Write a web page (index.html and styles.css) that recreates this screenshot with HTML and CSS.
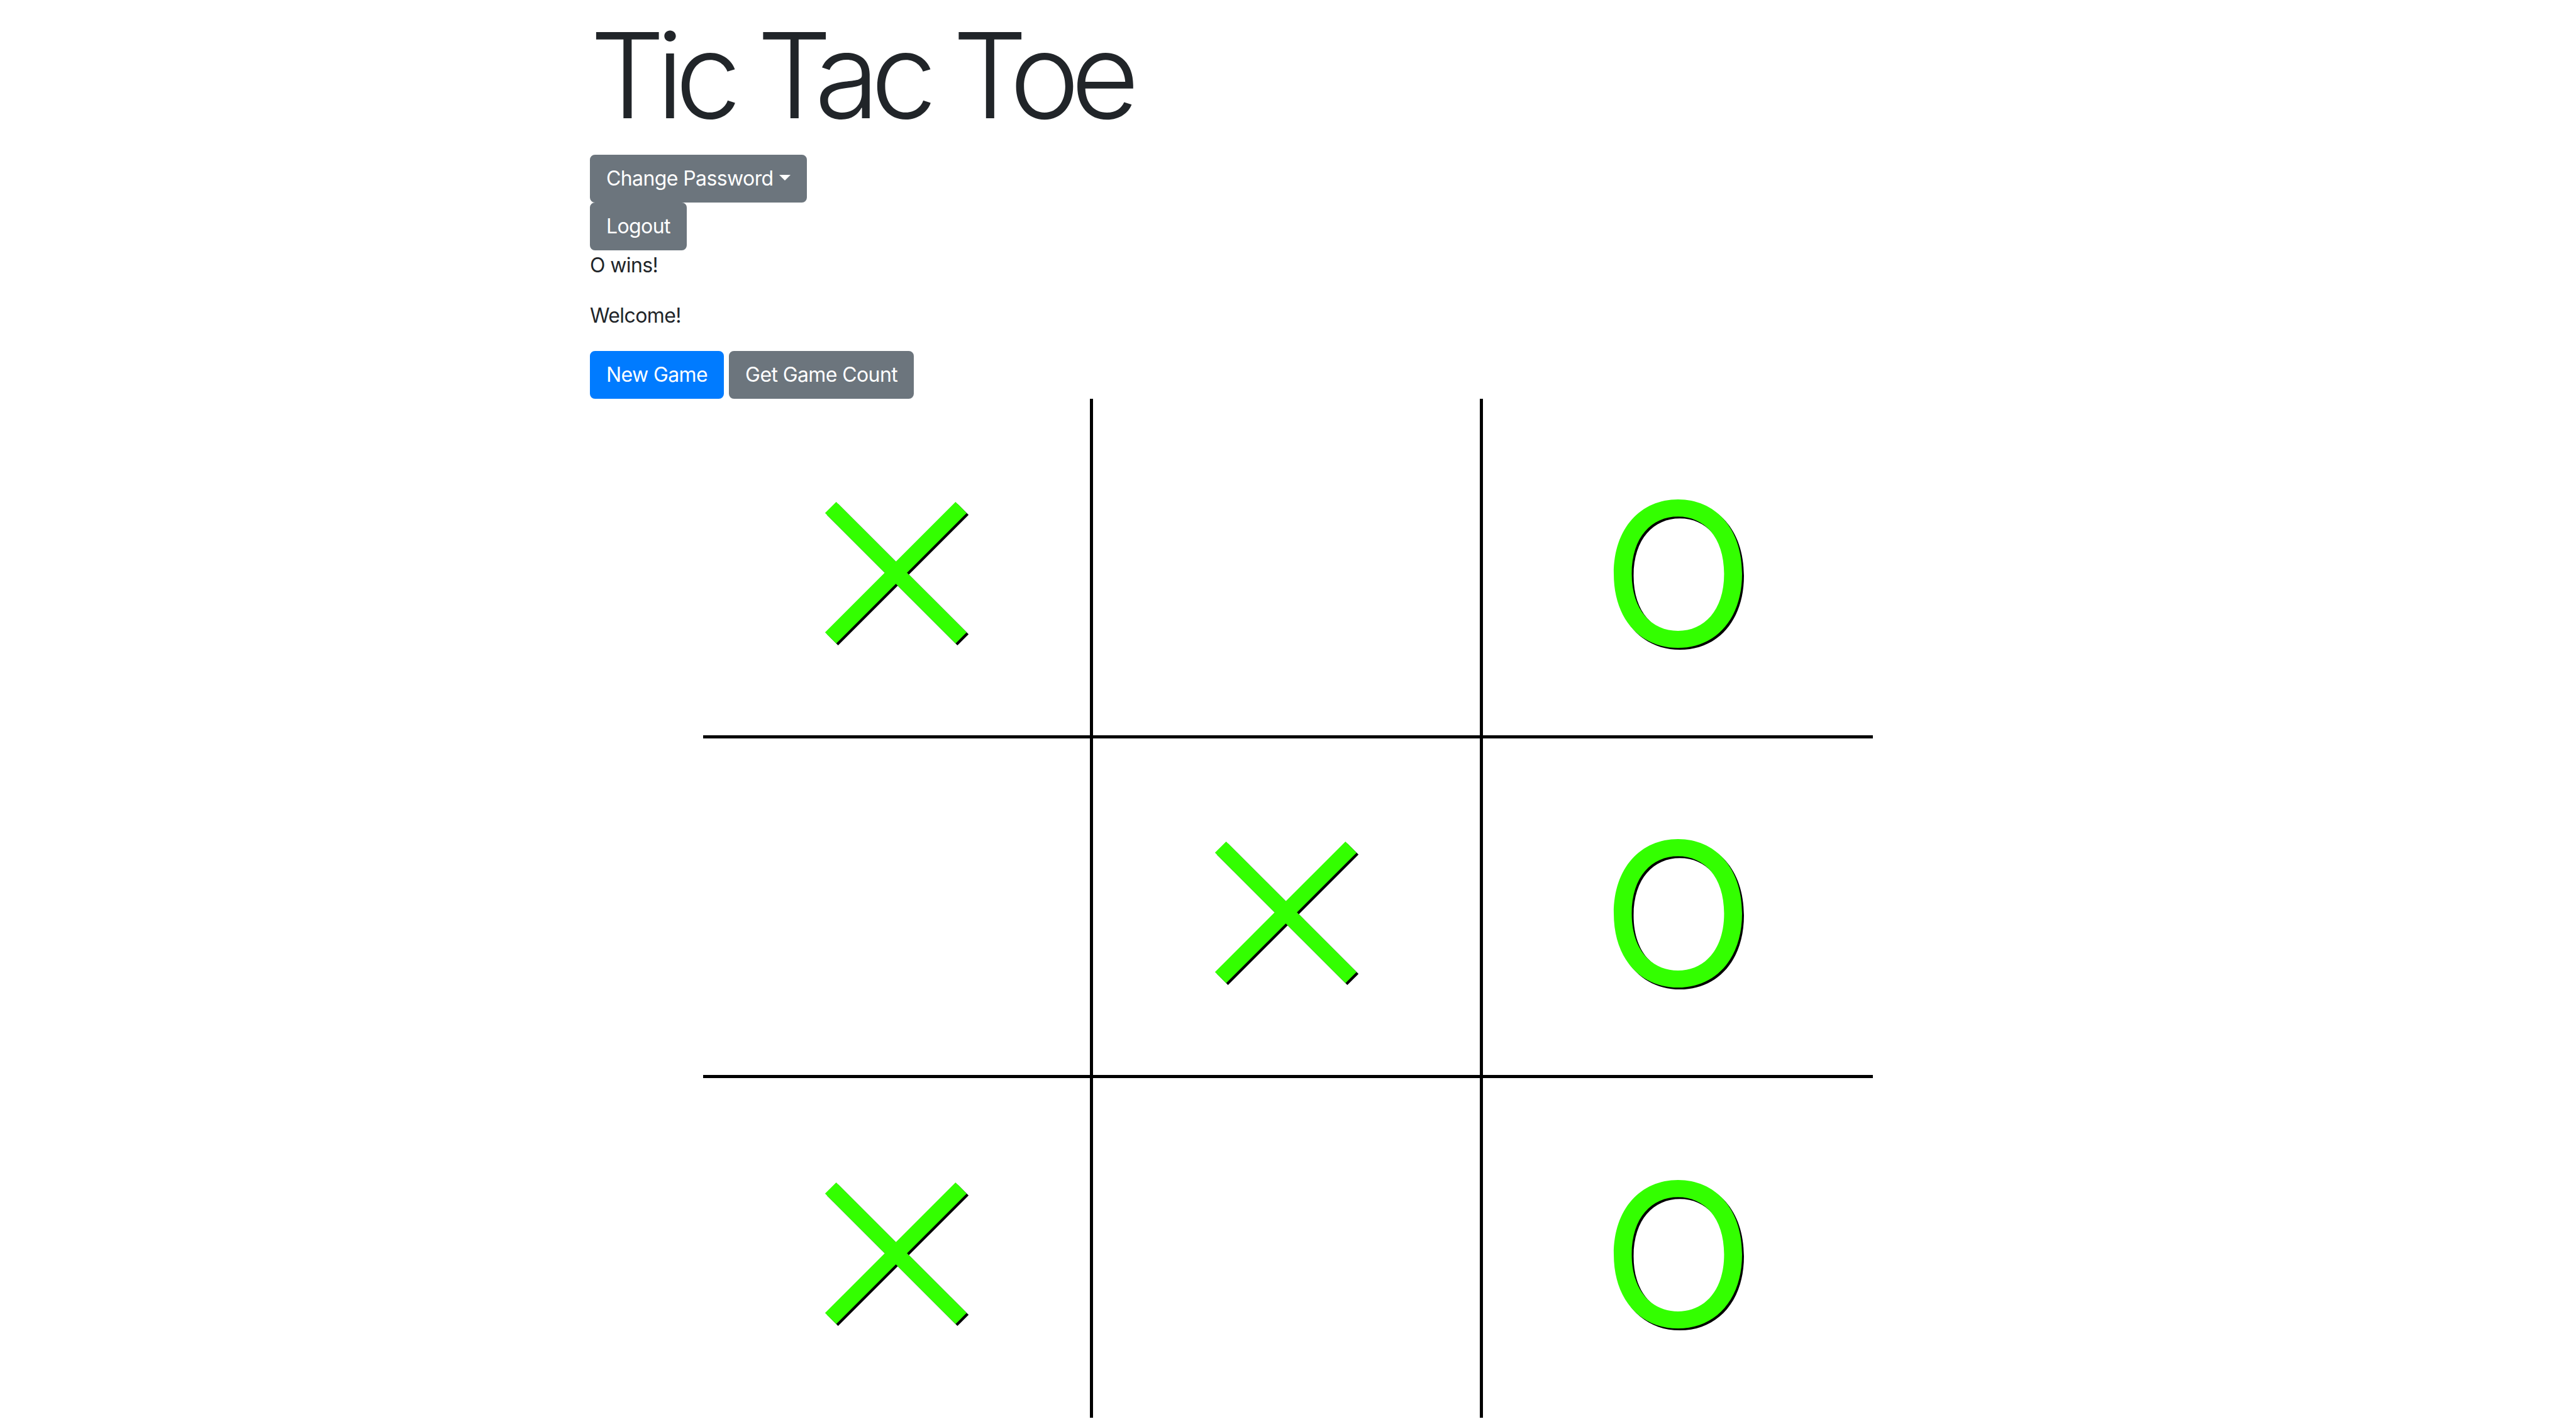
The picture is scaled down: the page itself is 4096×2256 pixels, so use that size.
FILE: index.html
```html
<!DOCTYPE html>
<html lang="en">
<head>
<meta charset="utf-8">
<title>Tic Tac Toe</title>
<link rel="stylesheet" href="styles.css">
</head>
<body>
<div class="container">
  <h1 class="title">Tic Tac Toe</h1>
  <div class="btn-row">
    <button class="btn btn-secondary dropdown-toggle" type="button">Change Password</button>
  </div>
  <div class="btn-row">
    <button class="btn btn-secondary" type="button">Logout</button>
  </div>
  <p class="msg">O wins!</p>
  <p class="msg">Welcome!</p>
  <div class="btn-row actions">
    <button class="btn btn-primary" type="button">New Game</button>
    <button class="btn btn-secondary" type="button">Get Game Count</button>
  </div>
  <div class="board">
    <div class="cell br bb">
      <svg class="mark-x" width="228" height="228" viewBox="0 0 228 228" aria-label="X">
        <g class="x-shadow" transform="translate(3 3)"><line x1="8.8" y1="8.8" x2="216.2" y2="216.2"/><line x1="216.2" y1="8.8" x2="8.8" y2="216.2"/></g>
        <g class="x-stroke"><line x1="8.8" y1="8.8" x2="216.2" y2="216.2"/><line x1="216.2" y1="8.8" x2="8.8" y2="216.2"/></g>
      </svg>
    </div>
    <div class="cell br bb"></div>
    <div class="cell bb"><span class="mark-o">O</span></div>
    <div class="cell br bb"></div>
    <div class="cell br bb">
      <svg class="mark-x" width="228" height="228" viewBox="0 0 228 228" aria-label="X">
        <g class="x-shadow" transform="translate(3 3)"><line x1="8.8" y1="8.8" x2="216.2" y2="216.2"/><line x1="216.2" y1="8.8" x2="8.8" y2="216.2"/></g>
        <g class="x-stroke"><line x1="8.8" y1="8.8" x2="216.2" y2="216.2"/><line x1="216.2" y1="8.8" x2="8.8" y2="216.2"/></g>
      </svg>
    </div>
    <div class="cell bb"><span class="mark-o">O</span></div>
    <div class="cell br">
      <svg class="mark-x" width="228" height="228" viewBox="0 0 228 228" aria-label="X">
        <g class="x-shadow" transform="translate(3 3)"><line x1="8.8" y1="8.8" x2="216.2" y2="216.2"/><line x1="216.2" y1="8.8" x2="8.8" y2="216.2"/></g>
        <g class="x-stroke"><line x1="8.8" y1="8.8" x2="216.2" y2="216.2"/><line x1="216.2" y1="8.8" x2="8.8" y2="216.2"/></g>
      </svg>
    </div>
    <div class="cell br"></div>
    <div class="cell"><span class="mark-o">O</span></div>
  </div>
</div>
</body>
</html>
```

FILE: styles.css
```css
html, body {
  margin: 0;
  padding: 0;
}

body {
  font-family: Inter, "Noto Sans", "Liberation Sans", sans-serif;
  font-size: 32px;
  line-height: 1.5;
  letter-spacing: -0.6px;
  color: #212529;
  background: #fff;
}

.container {
  width: 2280px;
  padding: 0 30px;
  margin: 0 auto;
  box-sizing: border-box;
}

.title {
  font-size: 188px;
  font-weight: 300;
  line-height: 230px;
  letter-spacing: -14px;
  padding-top: 5px;
  margin: 0 0 11px;
  color: #212529;
}

.btn-row {
  display: flex;
  gap: 8px;
}

.btn {
  font-family: inherit;
  font-size: 32px;
  font-weight: 400;
  line-height: 48px;
  letter-spacing: -0.6px;
  padding: 12px 24px;
  border: 2px solid transparent;
  border-radius: 8px;
  color: #fff;
  cursor: pointer;
}

.btn-secondary {
  background: #6c757d;
  border-color: #6c757d;
}

.btn-primary {
  background: #007bff;
  border-color: #007bff;
}

.dropdown-toggle::after {
  content: "";
  display: inline-block;
  margin-left: 9px;
  vertical-align: 8.16px;
  border-top: 9.6px solid;
  border-right: 9.6px solid transparent;
  border-left: 9.6px solid transparent;
  border-bottom: 0;
}

.msg {
  margin: 0 0 32px;
}

.board {
  width: 1860px;
  margin: 0 auto;
  display: grid;
  grid-template-columns: repeat(3, 1fr);
  grid-auto-rows: 540px;
}

.cell {
  display: flex;
  align-items: center;
  justify-content: center;
  padding-top: 20px;
  box-sizing: border-box;
}

.cell.br {
  border-right: 5px solid #000;
}

.cell.bb {
  border-bottom: 5px solid #000;
}

.mark-x {
  display: block;
}

.mark-x line {
  stroke-width: 25;
  stroke-linecap: butt;
}

.x-shadow {
  stroke: #000;
}

.x-stroke {
  stroke: #33ff00;
}

.mark-o {
  font-family: Inter, "Noto Sans", sans-serif;
  font-size: 316px;
  font-weight: 400;
  line-height: 1;
  letter-spacing: 0;
  color: #33ff00;
  text-shadow: 3px 3px 0 #000;
}
```
